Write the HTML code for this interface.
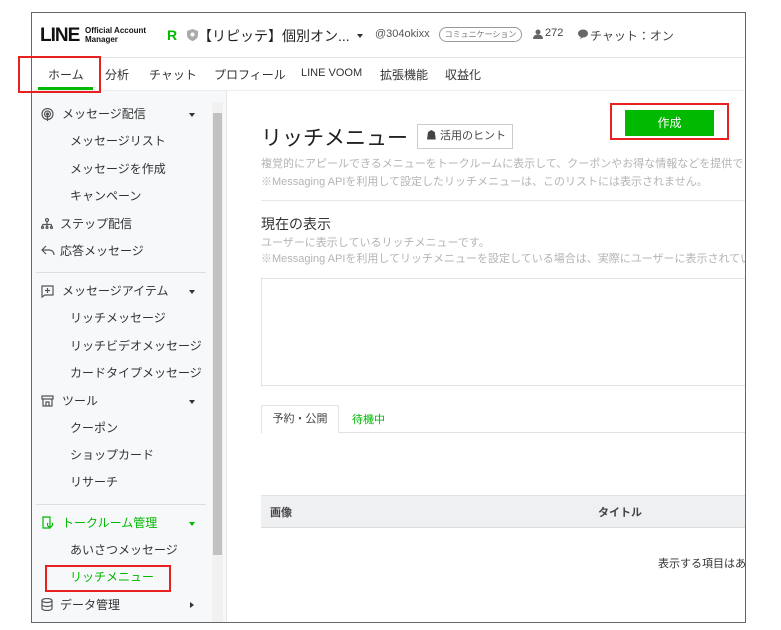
<!DOCTYPE html>
<html><head><meta charset="utf-8"><style>
*{margin:0;padding:0;box-sizing:border-box}
body{width:781px;height:630px;background:#fff;position:relative;overflow:hidden;font-family:"Liberation Sans","Noto Sans CJK JP",sans-serif;color:#333}
.a{position:absolute;white-space:nowrap}
#frame{position:absolute;left:31px;top:12px;width:715px;height:611px;border:1px solid #666;overflow:hidden;background:#fff}
.si{position:absolute;font-size:12px;color:#333;white-space:nowrap;line-height:14px}
.car{position:absolute;width:0;height:0;border-left:3px solid transparent;border-right:3px solid transparent;border-top:4px solid #333}
.g{color:#00b900}
.d{font-size:11px;color:#b4b4b4}
</style></head><body>
<div id="frame">
 <div class="a" style="left:8px;top:12px;font-size:19px;font-weight:bold;letter-spacing:-1px;color:#111">LINE</div>
 <div class="a" style="left:53px;top:13px;font-size:8px;font-weight:bold;line-height:9px;color:#111">Official Account<br>Manager</div>
 <div class="a" style="left:135px;top:14px;font-size:14px;font-weight:bold;color:#00b900">R</div>
 <svg class="a" style="left:155px;top:16px" width="11" height="12" viewBox="0 0 11 12"><path d="M5.5 0L11 2v4c0 3-2.5 5-5.5 6C2.5 11 0 9 0 6V2z" fill="#aaa"/><circle cx="5.5" cy="5.5" r="2" fill="#fff"/></svg>
 <div class="a" style="left:166px;top:13px;font-size:14px;color:#222">【リピッテ】個別オン...</div>
 <div class="car" style="left:325px;top:21px"></div>
 <div class="a" style="left:343px;top:15px;font-size:11px;color:#555">@304okixx</div>
 <div class="a" style="left:407px;top:14px;width:83px;height:15px;border:1px solid #999;border-radius:8px;font-size:8px;color:#777;text-align:center;line-height:13px">コミュニケーション</div>
 <svg class="a" style="left:501px;top:16px" width="10" height="10" viewBox="0 0 10 10"><circle cx="5" cy="3" r="2.5" fill="#666"/><path d="M0 10c0-3 2-4.5 5-4.5s5 1.5 5 4.5z" fill="#666"/></svg>
 <div class="a" style="left:513px;top:14px;font-size:11px;color:#444">272</div>
 <svg class="a" style="left:546px;top:16px" width="10" height="10" viewBox="0 0 10 10"><ellipse cx="5" cy="4.5" rx="5" ry="4" fill="#666"/><path d="M3 8l-1 2 3-1.5z" fill="#666"/></svg>
 <div class="a" style="left:558px;top:14px;font-size:12px;color:#444">チャット：オン</div>
 <div class="a" style="left:0;top:44px;width:715px;height:1px;background:#e4e4e4"></div>
 <div class="a" style="left:16px;top:53px;font-size:12px;color:#333">ホーム</div>
 <div class="a" style="left:6px;top:74px;width:55px;height:3px;background:#00b900"></div>
 <div class="a" style="left:73px;top:53px;font-size:12px">分析</div>
 <div class="a" style="left:117px;top:53px;font-size:12px">チャット</div>
 <div class="a" style="left:182px;top:53px;font-size:12px">プロフィール</div>
 <div class="a" style="left:269px;top:54px;font-size:11px">LINE VOOM</div>
 <div class="a" style="left:348px;top:53px;font-size:12px">拡張機能</div>
 <div class="a" style="left:413px;top:53px;font-size:12px">収益化</div>
 <div class="a" style="left:0;top:77px;width:715px;height:1px;background:#eee"></div>
 <!-- sidebar -->
 <div class="a" style="left:0;top:78px;width:195px;height:540px;background:#f7f8fa;border-right:1px solid #e6e6e6"></div>
 <div class="a" style="left:180px;top:89px;width:11px;height:530px;background:#f1f1f1"></div>
 <div class="a" style="left:181px;top:100px;width:9px;height:442px;background:#c1c1c1"></div>
 <svg class="a" style="left:9px;top:95px" width="13" height="13" viewBox="0 0 13 13" fill="none" stroke="#555" stroke-width="1.2"><circle cx="6.5" cy="6" r="5.5"/><circle cx="6.5" cy="6" r="3"/><circle cx="6.5" cy="6" r="1" fill="#555"/><path d="M6.5 7v6"/></svg>
 <div class="si" style="left:30px;top:94px">メッセージ配信</div><div class="car" style="left:157px;top:100px"></div>
 <div class="si" style="left:38px;top:121px">メッセージリスト</div>
 <div class="si" style="left:38px;top:149px">メッセージを作成</div>
 <div class="si" style="left:38px;top:176px">キャンペーン</div>
 <svg class="a" style="left:9px;top:205px" width="12" height="11" viewBox="0 0 12 11" fill="none" stroke="#555" stroke-width="1.2"><circle cx="6" cy="2" r="1.5"/><path d="M6 3.5v3M1.5 6.5h9M1.5 6.5v2M6 6.5v2M10.5 6.5v2"/><circle cx="1.5" cy="9.5" r="1"/><circle cx="6" cy="9.5" r="1"/><circle cx="10.5" cy="9.5" r="1"/></svg>
 <div class="si" style="left:28px;top:204px">ステップ配信</div>
 <svg class="a" style="left:9px;top:232px" width="14" height="11" viewBox="0 0 14 11" fill="none" stroke="#555" stroke-width="1.2"><path d="M5 1L1 5l4 4M1 5h7c3 0 5 2 5 5"/></svg>
 <div class="si" style="left:28px;top:231px">応答メッセージ</div>
 <div class="a" style="left:4px;top:259px;width:170px;height:1px;background:#ddd"></div>
 <svg class="a" style="left:9px;top:272px" width="13" height="13" viewBox="0 0 13 13" fill="none" stroke="#555" stroke-width="1.2"><path d="M1 1h11v9H4l-3 2z"/><path d="M6.5 3v5M4 5.5h5"/></svg>
 <div class="si" style="left:30px;top:271px">メッセージアイテム</div><div class="car" style="left:157px;top:277px"></div>
 <div class="si" style="left:38px;top:298px">リッチメッセージ</div>
 <div class="si" style="left:38px;top:326px">リッチビデオメッセージ</div>
 <div class="si" style="left:38px;top:353px">カードタイプメッセージ</div>
 <svg class="a" style="left:9px;top:382px" width="13" height="12" viewBox="0 0 13 12" fill="none" stroke="#555" stroke-width="1.2"><path d="M1 1h11v3H1zM2 4v7h9V4M5 11V7h3v4"/></svg>
 <div class="si" style="left:30px;top:381px">ツール</div><div class="car" style="left:157px;top:387px"></div>
 <div class="si" style="left:38px;top:408px">クーポン</div>
 <div class="si" style="left:38px;top:435px">ショップカード</div>
 <div class="si" style="left:38px;top:462px">リサーチ</div>
 <div class="a" style="left:4px;top:491px;width:170px;height:1px;background:#ddd"></div>
 <svg class="a" style="left:10px;top:503px" width="11" height="13" viewBox="0 0 11 13" fill="none" stroke="#00b900" stroke-width="1.2"><path d="M1 1h7v11H1zM6 7a2.5 2.5 0 1 0 4 0"/></svg>
 <div class="si g" style="left:30px;top:503px">トークルーム管理</div><div class="car" style="left:157px;top:509px;border-top-color:#00b900"></div>
 <div class="si" style="left:38px;top:530px">あいさつメッセージ</div>
 <div class="si g" style="left:38px;top:557px">リッチメニュー</div>
 <svg class="a" style="left:9px;top:585px" width="12" height="13" viewBox="0 0 12 13" fill="none" stroke="#555" stroke-width="1.2"><ellipse cx="6" cy="2.5" rx="5" ry="2"/><path d="M1 2.5v8c0 1 2 2 5 2s5-1 5-2v-8M1 6.5c0 1 2 2 5 2s5-1 5-2"/></svg>
 <div class="si" style="left:28px;top:585px">データ管理</div>
 <div class="a" style="left:158px;top:589px;width:0;height:0;border-top:3px solid transparent;border-bottom:3px solid transparent;border-left:4px solid #333"></div>
 <!-- main -->
 <div class="a" style="left:229px;top:109px;font-size:21px;color:#222">リッチメニュー</div>
 <div class="a" style="left:385px;top:111px;width:96px;height:25px;border:1px solid #ccc;background:#fff;font-size:11px;color:#444;line-height:23px;padding-left:8px">☗ 活用のヒント</div>
 <div class="a" style="left:593px;top:97px;width:89px;height:26px;background:#00b900;color:#fff;font-size:12px;text-align:center;line-height:26px">作成</div>
 <div class="a d" style="left:229px;top:142px">複覚的にアピールできるメニューをトークルームに表示して、クーポンやお得な情報などを提供できます。</div>
 <div class="a d" style="left:229px;top:160px">※Messaging APIを利用して設定したリッチメニューは、このリストには表示されません。</div>
 <div class="a" style="left:229px;top:187px;width:500px;height:1px;background:#e8e8e8"></div>
 <div class="a" style="left:229px;top:201px;font-size:14px;color:#333">現在の表示</div>
 <div class="a d" style="left:229px;top:221px">ユーザーに表示しているリッチメニューです。</div>
 <div class="a d" style="left:229px;top:237px">※Messaging APIを利用してリッチメニューを設定している場合は、実際にユーザーに表示されているリッチメニューと異なることがあります。</div>
 <div class="a" style="left:229px;top:265px;width:500px;height:108px;border:1px solid #e2e2e2"></div>
 <div class="a" style="left:229px;top:419px;width:500px;height:1px;background:#e2e2e2"></div>
 <div class="a" style="left:229px;top:392px;width:78px;height:28px;border:1px solid #e2e2e2;border-bottom:none;background:#fff;font-size:11px;color:#444;text-align:center;line-height:26px">予約・公開</div>
 <div class="a g" style="left:320px;top:398px;font-size:11px">待機中</div>
 <div class="a" style="left:229px;top:482px;width:500px;height:33px;background:#eff0f2;border-top:1px solid #e2e2e2;border-bottom:1px solid #dcdcdc"></div>
 <div class="a" style="left:238px;top:491px;font-size:11px;font-weight:bold;color:#444">画像</div>
 <div class="a" style="left:566px;top:491px;font-size:11px;font-weight:bold;color:#444">タイトル</div>
 <div class="a" style="left:626px;top:542px;font-size:11px;color:#333">表示する項目はありません</div>
</div>
<div class="a" style="left:18px;top:56px;width:83px;height:37px;border:2px solid #e82020"></div>
<div class="a" style="left:45px;top:565px;width:126px;height:27px;border:2px solid #e82020"></div>
<div class="a" style="left:610px;top:103px;width:119px;height:37px;border:2px solid #e82020"></div>
</body></html>
